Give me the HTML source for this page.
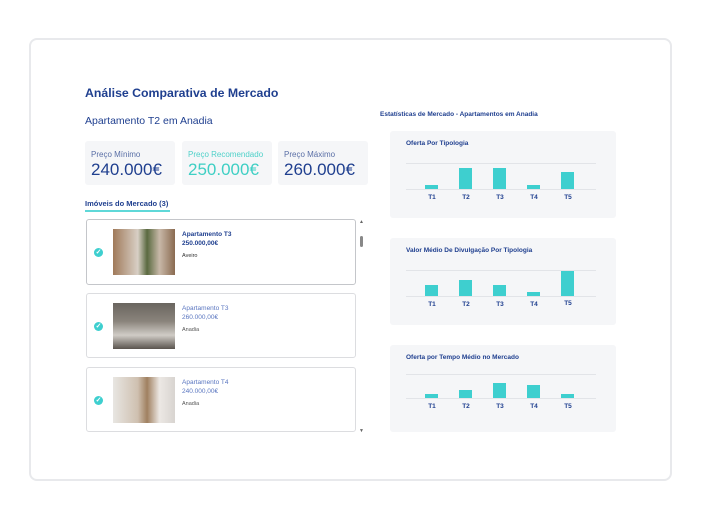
<!DOCTYPE html>
<html><head><meta charset="utf-8"><style>
*{margin:0;padding:0;box-sizing:border-box}
body{width:713px;height:522px;background:#fff;font-family:"Liberation Sans",sans-serif;position:relative;overflow:hidden}
.a{position:absolute}
.outer{left:29px;top:38px;width:643px;height:443px;border:2px solid #e8e9ec;border-radius:8px;background:#fff}
.blue{color:#1f3f8f}
.pc{background:#f5f6f8;border-radius:3px;height:44px;top:141px}
.pc .l{position:absolute;left:6px;top:9px;font-size:8px;color:#5a6fa6}
.pc .v{position:absolute;left:6px;top:19px;font-size:17px;color:#1f3f8f}
.card{left:86px;width:270px;background:#fff;border:1px solid #dcdde0;border-radius:3px}
.chk{position:absolute;left:7px;width:9px;height:9px;border-radius:50%;background:#3ecfcf;color:#fff;font-size:7px;line-height:9px;text-align:center;font-weight:bold}
.img{position:absolute;left:26px;width:62px;height:46px}
.t{position:absolute;left:95px;font-size:6.5px}
.ch{left:390px;width:226px;height:87px;background:#f5f6f8;border-radius:3px}
.ch .ti{position:absolute;left:16px;top:9px;font-size:6.5px;color:#1f3f8f;font-weight:bold}
.ln{position:absolute;left:16px;width:190px;height:1px;background:#e2e4e8}
.b{position:absolute;width:13px;background:#3ecfcf}
.lb{position:absolute;font-size:6.5px;color:#1f3f8f;width:20px;text-align:center;font-weight:bold}
</style></head><body>
<div class="a outer"></div>
<div class="a blue" style="left:85px;top:86px;font-size:12.3px;font-weight:bold">Análise Comparativa de Mercado</div>
<div class="a blue" style="left:85px;top:115px;font-size:10.5px">Apartamento T2 em Anadia</div>
<div class="a pc" style="left:85px;width:90px"><div class="l">Preço Mínimo</div><div class="v">240.000€</div></div>
<div class="a pc" style="left:182px;width:90px"><div class="l" style="color:#4fd1c9">Preço Recomendado</div><div class="v" style="color:#3ecfc4">250.000€</div></div>
<div class="a pc" style="left:278px;width:90px"><div class="l">Preço Máximo</div><div class="v">260.000€</div></div>
<div class="a blue" style="left:85px;top:199px;font-size:7.5px;font-weight:bold">Imóveis do Mercado (3)</div>
<div class="a" style="left:85px;top:210px;width:85px;height:2px;background:#5fd8d8"></div>
<div class="a card" style="top:219px;height:66px;border-color:#c4c6ca">
<div class="chk" style="top:28px">✓</div>
<div class="img" style="top:9px;background:linear-gradient(90deg,#a07a5a,#d8cfc5 40%,#5a6a40 55%,#c8b8a8 75%,#8a6a50)"></div>
<div class="t" style="top:11px;color:#1f3f8f;font-weight:bold">Apartamento T3</div>
<div class="t" style="top:20px;color:#1f3f8f;font-weight:bold">250.000,00€</div>
<div class="t" style="top:33px;color:#333;font-size:5.5px">Aveiro</div>
</div>
<div class="a card" style="top:293px;height:65px">
<div class="chk" style="top:28px">✓</div>
<div class="img" style="top:9px;background:linear-gradient(180deg,#6a655f,#8a847c 40%,#d0ccc6 70%,#5a544e)"></div>
<div class="t" style="top:11px;color:#5a76c0">Apartamento T3</div>
<div class="t" style="top:20px;color:#5a76c0">260.000,00€</div>
<div class="t" style="top:33px;color:#555;font-size:5.5px">Anadia</div>
</div>
<div class="a card" style="top:367px;height:65px">
<div class="chk" style="top:28px">✓</div>
<div class="img" style="top:9px;background:linear-gradient(90deg,#e8e6e2,#cfc0b0 40%,#a08060 55%,#ece8e4 75%,#d8d4d0)"></div>
<div class="t" style="top:11px;color:#5a76c0">Apartamento T4</div>
<div class="t" style="top:20px;color:#5a76c0">240.000,00€</div>
<div class="t" style="top:33px;color:#555;font-size:5.5px">Anadia</div>
</div>
<div class="a" style="left:360px;top:236px;width:3px;height:11px;background:#888;border-radius:2px"></div>
<div class="a" style="left:359px;top:219px;font-size:5px;color:#666">▲</div>
<div class="a" style="left:359px;top:428px;font-size:5px;color:#666">▼</div>
<div class="a blue" style="left:380px;top:111px;font-size:6.5px;font-weight:bold">Estatísticas de Mercado - Apartamentos em Anadia</div>

<div class="a ch" style="top:131px"><div class="ti">Oferta Por Tipologia</div>
<div class="ln" style="top:32px"></div><div class="ln" style="top:58px"></div>
<div class="b" style="left:35px;top:54px;height:4px"></div><div class="b" style="left:69px;top:37px;height:21px"></div><div class="b" style="left:103px;top:37px;height:21px"></div><div class="b" style="left:137px;top:54px;height:4px"></div><div class="b" style="left:171px;top:41px;height:17px"></div>
<div class="lb" style="left:32px;top:63px">T1</div><div class="lb" style="left:66px;top:63px">T2</div><div class="lb" style="left:100px;top:63px">T3</div><div class="lb" style="left:134px;top:63px">T4</div><div class="lb" style="left:168px;top:63px">T5</div></div>

<div class="a ch" style="top:238px"><div class="ti">Valor Médio De Divulgação Por Tipologia</div>
<div class="ln" style="top:32px"></div><div class="ln" style="top:58px"></div>
<div class="b" style="left:35px;top:47px;height:11px"></div><div class="b" style="left:69px;top:42px;height:16px"></div><div class="b" style="left:103px;top:47px;height:11px"></div><div class="b" style="left:137px;top:54px;height:4px"></div><div class="b" style="left:171px;top:33px;height:25px"></div>
<div class="lb" style="left:32px;top:63px">T1</div><div class="lb" style="left:66px;top:63px">T2</div><div class="lb" style="left:100px;top:63px">T3</div><div class="lb" style="left:134px;top:63px">T4</div><div class="lb" style="left:168px;top:62px">T5</div></div>

<div class="a ch" style="top:345px"><div class="ti">Oferta por Tempo Médio no Mercado</div>
<div class="ln" style="top:29px"></div><div class="ln" style="top:53px"></div>
<div class="b" style="left:35px;top:49px;height:4px"></div><div class="b" style="left:69px;top:45px;height:8px"></div><div class="b" style="left:103px;top:38px;height:15px"></div><div class="b" style="left:137px;top:40px;height:13px"></div><div class="b" style="left:171px;top:49px;height:4px"></div>
<div class="lb" style="left:32px;top:58px">T1</div><div class="lb" style="left:66px;top:58px">T2</div><div class="lb" style="left:100px;top:58px">T3</div><div class="lb" style="left:134px;top:58px">T4</div><div class="lb" style="left:168px;top:58px">T5</div></div>
</body></html>
